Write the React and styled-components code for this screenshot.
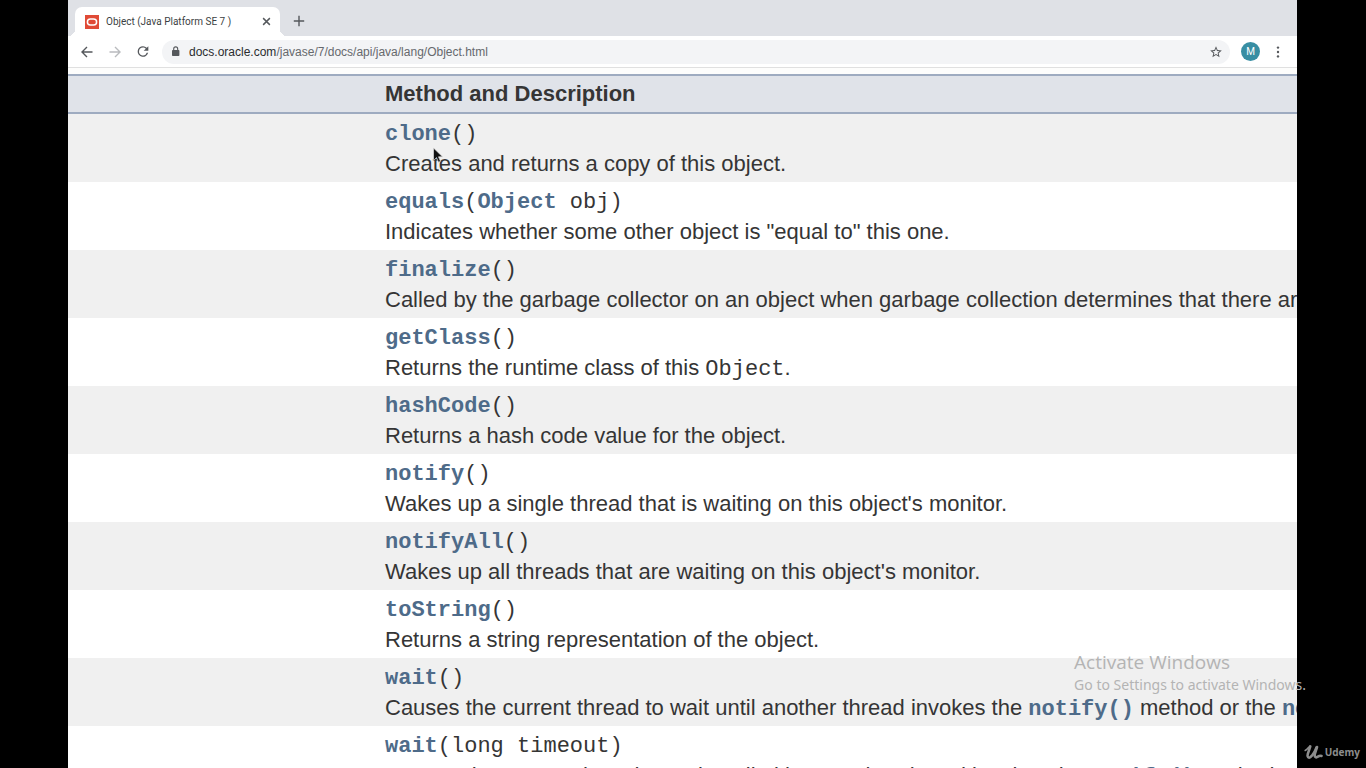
import React from 'react';
import styled, { createGlobalStyle } from 'styled-components';

const GlobalStyle = createGlobalStyle`
  *, *::before, *::after { box-sizing: border-box; }
  body { margin: 0; background: #000; }
  a { text-decoration: none; }
`;

const Screen = styled.div`
  position: relative;
  display: flex;
  height: 100vh;
  padding: 0 69px 0 68px;
  overflow: hidden;
  background: #000;
`;

const BrowserWindow = styled.div`
  display: flex;
  flex: 1;
  flex-direction: column;
  min-width: 0;
  overflow: hidden;
  background: #fff;
  font-family: Roboto, "Liberation Sans", sans-serif;
`;

const TabStrip = styled.header`
  display: flex;
  flex: none;
  align-items: flex-end;
  height: 36px;
  padding-left: 7px;
  background: #dfe1e6;
`;

const Tab = styled.div`
  position: relative;
  display: flex;
  align-items: center;
  width: 205px;
  height: 29px;
  padding: 0 9px 0 10px;
  border-radius: 7px 7px 0 0;
  background: #fff;

  &::before,
  &::after {
    content: "";
    position: absolute;
    bottom: 0;
    width: 7px;
    height: 7px;
  }
  &::before {
    right: 100%;
    background: radial-gradient(circle at 0 0, transparent 7px, #fff 7px);
  }
  &::after {
    left: 100%;
    background: radial-gradient(circle at 100% 0, transparent 7px, #fff 7px);
  }
`;

const TabTitle = styled.span`
  flex: 1;
  margin-left: 7px;
  overflow: hidden;
  color: #3c3f43;
  font-size: 10px;
  line-height: 16px;
  white-space: nowrap;
`;

const IconButton = styled.button`
  display: flex;
  flex: none;
  align-items: center;
  justify-content: center;
  width: ${({ $size }) => $size || 16}px;
  height: ${({ $size }) => $size || 16}px;
  padding: 0;
  border: 0;
  background: none;
  color: ${({ disabled }) => (disabled ? '#b9bbbe' : '#55585c')};
`;

const NewTab = styled(IconButton)`
  margin: 0 0 7px 11px;
`;

const Toolbar = styled.nav`
  display: flex;
  flex: none;
  align-items: center;
  gap: 12px;
  height: 32px;
  padding: 0 11px;
  border-bottom: 1px solid #e0e0e0;
  background: #fff;
`;

const AddressBar = styled.div`
  display: flex;
  flex: 1;
  align-items: center;
  gap: 8px;
  height: 24px;
  margin-left: -1px;
  padding: 0 6px 0 8px;
  border-radius: 12px;
  background: #f3f4f6;
`;

const UrlField = styled.div`
  flex: 1;
  color: #66696d;
  font: 12px/16px "Liberation Sans", Arial, sans-serif;
  white-space: nowrap;

  &:focus { outline: none; }
`;

const UrlHost = styled.span`
  color: #2a2c2f;
`;

const Avatar = styled.button`
  flex: none;
  width: 19px;
  height: 19px;
  margin: 0 -2px 0 -1px;
  padding: 0;
  border: 0;
  border-radius: 50%;
  background: #388ea3;
  color: #fff;
  font: 10px/19px Roboto, sans-serif;
`;

const Page = styled.main`
  flex: 1;
  min-height: 0;
  padding-top: 6px;
  overflow: hidden;
  background: #fdfdfc;
`;

const MethodTable = styled.table`
  width: 150%;
  border-collapse: separate;
  border-spacing: 0;
  table-layout: fixed;
  color: #353535;
  font: 22px/30px "Liberation Sans", Arial, sans-serif;
  white-space: nowrap;
`;

const TypeColumn = styled.col`
  width: 307px;
`;

const HeadCell = styled.th`
  height: 40px;
  padding: 0 10px;
  border-top: 2px solid #9eabc0;
  border-bottom: 2px solid #9eabc0;
  background: #e0e3e9;
  text-align: left;
`;

const MethodRow = styled.tr`
  background: #fff;

  &:nth-child(odd) { background: #f0f0f0; }
`;

const Cell = styled.td`
  padding: 5px 10px;
  vertical-align: top;
`;

const Signature = styled.code`
  display: block;
  font: 22px/32px "Liberation Mono", "Courier New", monospace;
`;

const InlineCode = styled.code`
  font: 22px/20px "Liberation Mono", "Courier New", monospace;
`;

const DocLink = styled.a`
  color: #4e6b89;
  font-weight: bold;
`;

const Description = styled.div`
  height: 26px;
  line-height: 26px;
`;

const Pointer = styled.svg`
  position: absolute;
  top: 147px;
  left: 432px;
`;

const Activation = styled.aside`
  position: absolute;
  right: 60px;
  bottom: 73px;
  color: #b4b4b4;
  font: 14px/20px "Noto Sans", sans-serif;
  white-space: nowrap;
`;

const ActivationTitle = styled.div`
  font: 19px/26px "Open Sans", sans-serif;
`;

const Brand = styled.div`
  position: absolute;
  right: 6px;
  bottom: 6px;
  display: flex;
  align-items: center;
  gap: 2px;
  color: #8d8d8d;
  font: 700 10px/20px "Open Sans", sans-serif;
`;

const NotifyLink = ({ name }) => (
  <InlineCode>
    <DocLink href={'#' + name}>{name}()</DocLink>
  </InlineCode>
);

const waitTail = (
  <>
    another thread invokes the <NotifyLink name="notify" /> method or the{' '}
    <NotifyLink name="notifyAll" />
  </>
);

const methods = [
  { name: 'clone', args: '()', text: 'Creates and returns a copy of this object.' },
  {
    name: 'equals',
    args: <>(<DocLink href="#object">Object</DocLink> obj)</>,
    text: 'Indicates whether some other object is "equal to" this one.',
  },
  {
    name: 'finalize',
    args: '()',
    text: 'Called by the garbage collector on an object when garbage collection determines that there are no more references',
  },
  { name: 'getClass', args: '()', text: <>Returns the runtime class of this <InlineCode>Object</InlineCode>.</> },
  { name: 'hashCode', args: '()', text: 'Returns a hash code value for the object.' },
  { name: 'notify', args: '()', text: "Wakes up a single thread that is waiting on this object's monitor." },
  { name: 'notifyAll', args: '()', text: "Wakes up all threads that are waiting on this object's monitor." },
  { name: 'toString', args: '()', text: 'Returns a string representation of the object.' },
  { name: 'wait', args: '()', text: <>Causes the current thread to wait until {waitTail}</> },
  { name: 'wait', args: '(long timeout)', text: <>Causes the current thread to wait until either {waitTail}</> },
];

const Stroke = ({ size = 12, width = 1.4, children }) => (
  <svg width={size} height={size} viewBox="0 0 12 12" fill="none" stroke="currentColor" strokeWidth={width} aria-hidden="true">
    {children}
  </svg>
);

export default function App() {
  return (
    <Screen>
      <GlobalStyle />
      <BrowserWindow>
        <TabStrip>
          <Tab>
            <svg width="14" height="14" viewBox="0 0 14 14" aria-hidden="true">
              <rect width="14" height="14" fill="#e04a36" />
              <rect x="2.4" y="4" width="9.2" height="6" rx="3" fill="none" stroke="#fff" strokeWidth="1.5" />
            </svg>
            <TabTitle>Object (Java Platform SE 7 )</TabTitle>
            <IconButton $size={10} aria-label="Close tab">
              <Stroke size={9} width={1.9}><path d="M1.5 1.5l9 9M10.5 1.5l-9 9" /></Stroke>
            </IconButton>
          </Tab>
          <NewTab aria-label="New tab">
            <Stroke><path d="M6 .8v10.4M.8 6h10.4" /></Stroke>
          </NewTab>
        </TabStrip>
        <Toolbar>
          <IconButton aria-label="Back">
            <Stroke><path d="M11.5 6H1M6 1L1 6l5 5" /></Stroke>
          </IconButton>
          <IconButton aria-label="Forward" disabled>
            <Stroke><path d="M.5 6H11M6 1l5 5-5 5" /></Stroke>
          </IconButton>
          <IconButton aria-label="Reload">
            <svg width="17" height="17" viewBox="0 0 24 24" fill="currentColor" aria-hidden="true">
              <path d="M17.65 6.35A7.96 7.96 0 0 0 12 4a8 8 0 1 0 7.73 10h-2.08A6 6 0 1 1 12 6c1.66 0 3.14.69 4.22 1.78L13 11h7V4z" />
            </svg>
          </IconButton>
          <AddressBar>
            <svg width="11" height="11" viewBox="0 0 11 11" aria-hidden="true">
              <rect x="2" y="4" width="7.4" height="6" rx=".8" fill="#55585c" />
              <path d="M3.7 4.3V2.9a2 2 0 0 1 4 0v1.4" fill="none" stroke="#55585c" strokeWidth="1.1" />
            </svg>
            <UrlField role="textbox" aria-label="Address" contentEditable suppressContentEditableWarning spellCheck={false}>
              <UrlHost>docs.oracle.com</UrlHost>/javase/7/docs/api/java/lang/Object.html
            </UrlField>
            <IconButton aria-label="Bookmark this page">
              <svg width="14" height="14" viewBox="0 0 24 24" fill="currentColor" aria-hidden="true">
                <path d="M22 9.24l-7.19-.62L12 2 9.19 8.63 2 9.24l5.46 4.73L5.82 21 12 17.27 18.18 21l-1.63-7.03zM12 15.4l-3.76 2.27 1-4.28-3.32-2.88 4.38-.38L12 6.1l1.71 4.04 4.38.38-3.32 2.88 1 4.28z" />
              </svg>
            </IconButton>
          </AddressBar>
          <Avatar aria-label="Profile">M</Avatar>
          <IconButton aria-label="Menu">
            <svg width="4" height="12" viewBox="0 0 4 12" fill="currentColor" aria-hidden="true">
              <circle cx="2" cy="1.6" r="1.2" />
              <circle cx="2" cy="6" r="1.2" />
              <circle cx="2" cy="10.4" r="1.2" />
            </svg>
          </IconButton>
        </Toolbar>
        <Page>
          <MethodTable>
            <colgroup>
              <TypeColumn />
              <col />
            </colgroup>
            <thead>
              <tr>
                <HeadCell aria-label="Modifier and Type" />
                <HeadCell scope="col">Method and Description</HeadCell>
              </tr>
            </thead>
            <tbody>
              {methods.map(({ name, args, text }, index) => (
                <MethodRow key={index}>
                  <Cell />
                  <Cell>
                    <Signature><DocLink href={'#' + name}>{name}</DocLink>{args}</Signature>
                    <Description>{text}</Description>
                  </Cell>
                </MethodRow>
              ))}
            </tbody>
          </MethodTable>
        </Page>
      </BrowserWindow>
      <Pointer width="12" height="18" viewBox="0 0 12 18" aria-hidden="true">
        <path d="M1.5 1v12.4l3-2.8 2 4.6 2-.9-2-4.5h4z" fill="#111" stroke="#ddd" strokeWidth=".7" />
      </Pointer>
      <Activation>
        <ActivationTitle>Activate Windows</ActivationTitle>
        Go to Settings to activate Windows.
      </Activation>
      <Brand>
        <svg width="19" height="16" viewBox="0 0 19 16" fill="none" stroke="currentColor" strokeLinecap="round" strokeLinejoin="round" aria-hidden="true">
          <path d="M1.200 6.500C3 5.500 4.500 3.500 5.800 2.200" strokeWidth="1.600" />
          <path d="M6.300 2.400L3.800 9.800C2.800 13.200 4.500 14.400 6.500 13C9 11 11 7.500 12.500 3.500" strokeWidth="2.600" />
          <path d="M13 3L10.800 10C10.200 13 12 14.200 14 12.600C15.500 11.500 16.500 11.500 17.500 12" strokeWidth="2.600" />
        </svg>
        Udemy
      </Brand>
    </Screen>
  );
}
